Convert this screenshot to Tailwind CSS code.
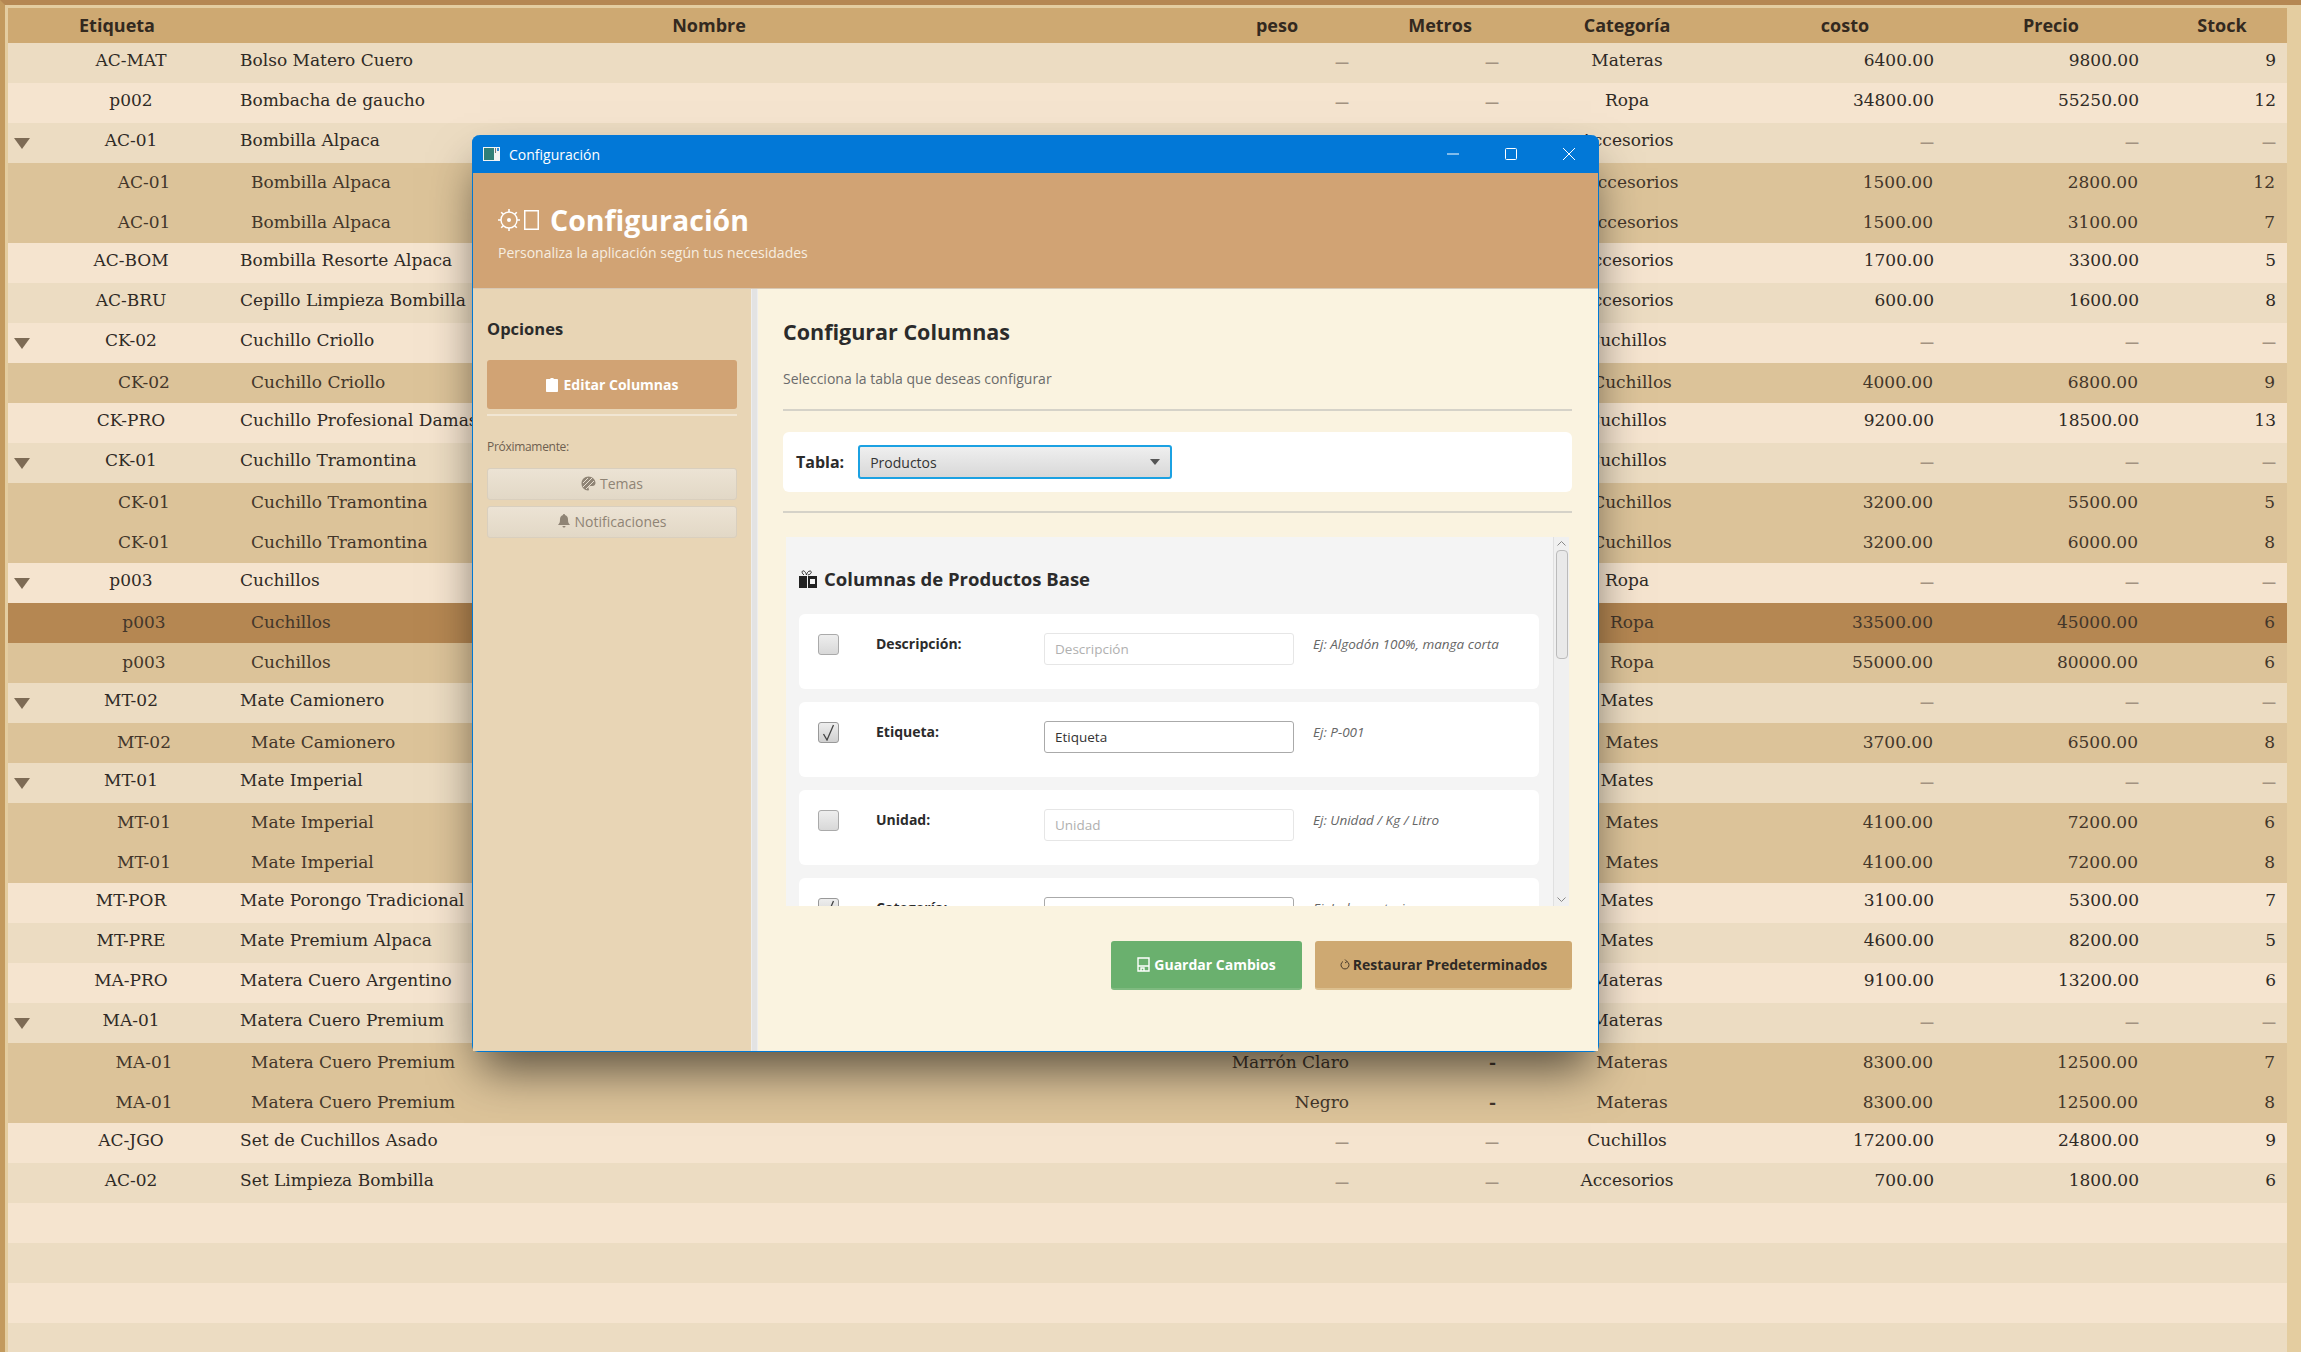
<!DOCTYPE html>
<html lang="es"><head><meta charset="utf-8"><title>Configuración</title>
<script src="https://cdn.jsdelivr.net/npm/@tailwindcss/browser@4"></script></head>
<body class="overflow-hidden">
<div class="relative w-[2301px] h-[1352px] overflow-hidden bg-[#e4cda0] border-t-[5px] border-t-[#b58752] border-l-[5px] border-l-[#c39a5e] pt-[3px] pl-[3px] pr-[14px] font-['DejaVu_Serif',serif] text-[17px] text-[#2f2a25]">

<div class="grid grid-cols-[224px_954px_182px_144px_230px_206px_206px_133px] h-[35px] items-center bg-[#cea972] font-['Open_Sans',sans-serif] font-bold text-[18px] text-[#33291f] text-center">
<div class="pr-[6px]">Etiqueta</div><div>Nombre</div><div>peso</div><div>Metros</div><div>Categoría</div><div>costo</div><div>Precio</div><div class="pl-[3px]">Stock</div></div>

<div class="grid grid-cols-[28px_196px_954px_182px_144px_230px_206px_206px_133px] h-10 items-center pb-1 bg-[#ecdcc2]"><div></div><div class="pr-[6px] text-center">AC-MAT</div><div class="pl-2">Bolso Matero Cuero</div><div class="pr-[19px] text-right font-['Open_Sans',sans-serif] font-bold text-[14px] text-[#a39280]">—</div><div class="pr-[13px] text-right font-['Open_Sans',sans-serif] font-bold text-[14px] text-[#a39280]">—</div><div class="text-center">Materas</div><div class="pr-[14px] text-right">6400.00</div><div class="pr-[15px] text-right">9800.00</div><div class="pr-[11px] text-right">9</div></div>
<div class="grid grid-cols-[28px_196px_954px_182px_144px_230px_206px_206px_133px] h-10 items-center pb-1 bg-[#f5e4cf]"><div></div><div class="pr-[6px] text-center">p002</div><div class="pl-2">Bombacha de gaucho</div><div class="pr-[19px] text-right font-['Open_Sans',sans-serif] font-bold text-[14px] text-[#a39280]">—</div><div class="pr-[13px] text-right font-['Open_Sans',sans-serif] font-bold text-[14px] text-[#a39280]">—</div><div class="text-center">Ropa</div><div class="pr-[14px] text-right">34800.00</div><div class="pr-[15px] text-right">55250.00</div><div class="pr-[11px] text-right">12</div></div>
<div class="grid grid-cols-[28px_196px_954px_182px_144px_230px_206px_206px_133px] h-10 items-center pb-1 bg-[#ecdcc2]"><div class="pl-[6px] pt-1"><svg width="16" height="11" viewBox="0 0 16 11" class="block"><path d="M0 0H16L8 11Z" fill="#7d6b55"/></svg></div><div class="pr-[6px] text-center">AC-01</div><div class="pl-2">Bombilla Alpaca</div><div></div><div></div><div class="text-center">Accesorios</div><div class="pr-[14px] text-right font-['Open_Sans',sans-serif] font-bold text-[14px] text-[#a39280]">—</div><div class="pr-[15px] text-right font-['Open_Sans',sans-serif] font-bold text-[14px] text-[#a39280]">—</div><div class="pr-[11px] text-right font-['Open_Sans',sans-serif] font-bold text-[14px] text-[#a39280]">—</div></div>
<div class="grid grid-cols-[28px_196px_954px_182px_144px_230px_206px_206px_133px] h-10 items-center bg-[#dcc399] text-[#43362a]"><div></div><div class="pl-[20px] text-center">AC-01</div><div class="pl-[19px]">Bombilla Alpaca</div><div></div><div></div><div class="pl-[10px] text-center">Accesorios</div><div class="pr-[15px] text-right">1500.00</div><div class="pr-[16px] text-right">2800.00</div><div class="pr-[12px] text-right">12</div></div>
<div class="grid grid-cols-[28px_196px_954px_182px_144px_230px_206px_206px_133px] h-10 items-center bg-[#dcc399] text-[#43362a]"><div></div><div class="pl-[20px] text-center">AC-01</div><div class="pl-[19px]">Bombilla Alpaca</div><div></div><div></div><div class="pl-[10px] text-center">Accesorios</div><div class="pr-[15px] text-right">1500.00</div><div class="pr-[16px] text-right">3100.00</div><div class="pr-[12px] text-right">7</div></div>
<div class="grid grid-cols-[28px_196px_954px_182px_144px_230px_206px_206px_133px] h-10 items-center pb-1 bg-[#f5e4cf]"><div></div><div class="pr-[6px] text-center">AC-BOM</div><div class="pl-2">Bombilla Resorte Alpaca</div><div></div><div></div><div class="text-center">Accesorios</div><div class="pr-[14px] text-right">1700.00</div><div class="pr-[15px] text-right">3300.00</div><div class="pr-[11px] text-right">5</div></div>
<div class="grid grid-cols-[28px_196px_954px_182px_144px_230px_206px_206px_133px] h-10 items-center pb-1 bg-[#ecdcc2]"><div></div><div class="pr-[6px] text-center">AC-BRU</div><div class="pl-2">Cepillo Limpieza Bombilla</div><div></div><div></div><div class="text-center">Accesorios</div><div class="pr-[14px] text-right">600.00</div><div class="pr-[15px] text-right">1600.00</div><div class="pr-[11px] text-right">8</div></div>
<div class="grid grid-cols-[28px_196px_954px_182px_144px_230px_206px_206px_133px] h-10 items-center pb-1 bg-[#f5e4cf]"><div class="pl-[6px] pt-1"><svg width="16" height="11" viewBox="0 0 16 11" class="block"><path d="M0 0H16L8 11Z" fill="#7d6b55"/></svg></div><div class="pr-[6px] text-center">CK-02</div><div class="pl-2">Cuchillo Criollo</div><div></div><div></div><div class="text-center">Cuchillos</div><div class="pr-[14px] text-right font-['Open_Sans',sans-serif] font-bold text-[14px] text-[#a39280]">—</div><div class="pr-[15px] text-right font-['Open_Sans',sans-serif] font-bold text-[14px] text-[#a39280]">—</div><div class="pr-[11px] text-right font-['Open_Sans',sans-serif] font-bold text-[14px] text-[#a39280]">—</div></div>
<div class="grid grid-cols-[28px_196px_954px_182px_144px_230px_206px_206px_133px] h-10 items-center bg-[#dcc399] text-[#43362a]"><div></div><div class="pl-[20px] text-center">CK-02</div><div class="pl-[19px]">Cuchillo Criollo</div><div></div><div></div><div class="pl-[10px] text-center">Cuchillos</div><div class="pr-[15px] text-right">4000.00</div><div class="pr-[16px] text-right">6800.00</div><div class="pr-[12px] text-right">9</div></div>
<div class="grid grid-cols-[28px_196px_954px_182px_144px_230px_206px_206px_133px] h-10 items-center pb-1 bg-[#f5e4cf]"><div></div><div class="pr-[6px] text-center">CK-PRO</div><div class="pl-2">Cuchillo Profesional Damasco</div><div></div><div></div><div class="text-center">Cuchillos</div><div class="pr-[14px] text-right">9200.00</div><div class="pr-[15px] text-right">18500.00</div><div class="pr-[11px] text-right">13</div></div>
<div class="grid grid-cols-[28px_196px_954px_182px_144px_230px_206px_206px_133px] h-10 items-center pb-1 bg-[#ecdcc2]"><div class="pl-[6px] pt-1"><svg width="16" height="11" viewBox="0 0 16 11" class="block"><path d="M0 0H16L8 11Z" fill="#7d6b55"/></svg></div><div class="pr-[6px] text-center">CK-01</div><div class="pl-2">Cuchillo Tramontina</div><div></div><div></div><div class="text-center">Cuchillos</div><div class="pr-[14px] text-right font-['Open_Sans',sans-serif] font-bold text-[14px] text-[#a39280]">—</div><div class="pr-[15px] text-right font-['Open_Sans',sans-serif] font-bold text-[14px] text-[#a39280]">—</div><div class="pr-[11px] text-right font-['Open_Sans',sans-serif] font-bold text-[14px] text-[#a39280]">—</div></div>
<div class="grid grid-cols-[28px_196px_954px_182px_144px_230px_206px_206px_133px] h-10 items-center bg-[#dcc399] text-[#43362a]"><div></div><div class="pl-[20px] text-center">CK-01</div><div class="pl-[19px]">Cuchillo Tramontina</div><div></div><div></div><div class="pl-[10px] text-center">Cuchillos</div><div class="pr-[15px] text-right">3200.00</div><div class="pr-[16px] text-right">5500.00</div><div class="pr-[12px] text-right">5</div></div>
<div class="grid grid-cols-[28px_196px_954px_182px_144px_230px_206px_206px_133px] h-10 items-center bg-[#dcc399] text-[#43362a]"><div></div><div class="pl-[20px] text-center">CK-01</div><div class="pl-[19px]">Cuchillo Tramontina</div><div></div><div></div><div class="pl-[10px] text-center">Cuchillos</div><div class="pr-[15px] text-right">3200.00</div><div class="pr-[16px] text-right">6000.00</div><div class="pr-[12px] text-right">8</div></div>
<div class="grid grid-cols-[28px_196px_954px_182px_144px_230px_206px_206px_133px] h-10 items-center pb-1 bg-[#f5e4cf]"><div class="pl-[6px] pt-1"><svg width="16" height="11" viewBox="0 0 16 11" class="block"><path d="M0 0H16L8 11Z" fill="#7d6b55"/></svg></div><div class="pr-[6px] text-center">p003</div><div class="pl-2">Cuchillos</div><div></div><div></div><div class="text-center">Ropa</div><div class="pr-[14px] text-right font-['Open_Sans',sans-serif] font-bold text-[14px] text-[#a39280]">—</div><div class="pr-[15px] text-right font-['Open_Sans',sans-serif] font-bold text-[14px] text-[#a39280]">—</div><div class="pr-[11px] text-right font-['Open_Sans',sans-serif] font-bold text-[14px] text-[#a39280]">—</div></div>
<div class="grid grid-cols-[28px_196px_954px_182px_144px_230px_206px_206px_133px] h-10 items-center bg-[#b58752] text-[#43362a]"><div></div><div class="pl-[20px] text-center">p003</div><div class="pl-[19px]">Cuchillos</div><div></div><div></div><div class="pl-[10px] text-center">Ropa</div><div class="pr-[15px] text-right">33500.00</div><div class="pr-[16px] text-right">45000.00</div><div class="pr-[12px] text-right">6</div></div>
<div class="grid grid-cols-[28px_196px_954px_182px_144px_230px_206px_206px_133px] h-10 items-center bg-[#dcc399] text-[#43362a]"><div></div><div class="pl-[20px] text-center">p003</div><div class="pl-[19px]">Cuchillos</div><div></div><div></div><div class="pl-[10px] text-center">Ropa</div><div class="pr-[15px] text-right">55000.00</div><div class="pr-[16px] text-right">80000.00</div><div class="pr-[12px] text-right">6</div></div>
<div class="grid grid-cols-[28px_196px_954px_182px_144px_230px_206px_206px_133px] h-10 items-center pb-1 bg-[#ecdcc2]"><div class="pl-[6px] pt-1"><svg width="16" height="11" viewBox="0 0 16 11" class="block"><path d="M0 0H16L8 11Z" fill="#7d6b55"/></svg></div><div class="pr-[6px] text-center">MT-02</div><div class="pl-2">Mate Camionero</div><div></div><div></div><div class="text-center">Mates</div><div class="pr-[14px] text-right font-['Open_Sans',sans-serif] font-bold text-[14px] text-[#a39280]">—</div><div class="pr-[15px] text-right font-['Open_Sans',sans-serif] font-bold text-[14px] text-[#a39280]">—</div><div class="pr-[11px] text-right font-['Open_Sans',sans-serif] font-bold text-[14px] text-[#a39280]">—</div></div>
<div class="grid grid-cols-[28px_196px_954px_182px_144px_230px_206px_206px_133px] h-10 items-center bg-[#dcc399] text-[#43362a]"><div></div><div class="pl-[20px] text-center">MT-02</div><div class="pl-[19px]">Mate Camionero</div><div></div><div></div><div class="pl-[10px] text-center">Mates</div><div class="pr-[15px] text-right">3700.00</div><div class="pr-[16px] text-right">6500.00</div><div class="pr-[12px] text-right">8</div></div>
<div class="grid grid-cols-[28px_196px_954px_182px_144px_230px_206px_206px_133px] h-10 items-center pb-1 bg-[#ecdcc2]"><div class="pl-[6px] pt-1"><svg width="16" height="11" viewBox="0 0 16 11" class="block"><path d="M0 0H16L8 11Z" fill="#7d6b55"/></svg></div><div class="pr-[6px] text-center">MT-01</div><div class="pl-2">Mate Imperial</div><div></div><div></div><div class="text-center">Mates</div><div class="pr-[14px] text-right font-['Open_Sans',sans-serif] font-bold text-[14px] text-[#a39280]">—</div><div class="pr-[15px] text-right font-['Open_Sans',sans-serif] font-bold text-[14px] text-[#a39280]">—</div><div class="pr-[11px] text-right font-['Open_Sans',sans-serif] font-bold text-[14px] text-[#a39280]">—</div></div>
<div class="grid grid-cols-[28px_196px_954px_182px_144px_230px_206px_206px_133px] h-10 items-center bg-[#dcc399] text-[#43362a]"><div></div><div class="pl-[20px] text-center">MT-01</div><div class="pl-[19px]">Mate Imperial</div><div></div><div></div><div class="pl-[10px] text-center">Mates</div><div class="pr-[15px] text-right">4100.00</div><div class="pr-[16px] text-right">7200.00</div><div class="pr-[12px] text-right">6</div></div>
<div class="grid grid-cols-[28px_196px_954px_182px_144px_230px_206px_206px_133px] h-10 items-center bg-[#dcc399] text-[#43362a]"><div></div><div class="pl-[20px] text-center">MT-01</div><div class="pl-[19px]">Mate Imperial</div><div></div><div></div><div class="pl-[10px] text-center">Mates</div><div class="pr-[15px] text-right">4100.00</div><div class="pr-[16px] text-right">7200.00</div><div class="pr-[12px] text-right">8</div></div>
<div class="grid grid-cols-[28px_196px_954px_182px_144px_230px_206px_206px_133px] h-10 items-center pb-1 bg-[#f5e4cf]"><div></div><div class="pr-[6px] text-center">MT-POR</div><div class="pl-2">Mate Porongo Tradicional</div><div></div><div></div><div class="text-center">Mates</div><div class="pr-[14px] text-right">3100.00</div><div class="pr-[15px] text-right">5300.00</div><div class="pr-[11px] text-right">7</div></div>
<div class="grid grid-cols-[28px_196px_954px_182px_144px_230px_206px_206px_133px] h-10 items-center pb-1 bg-[#ecdcc2]"><div></div><div class="pr-[6px] text-center">MT-PRE</div><div class="pl-2">Mate Premium Alpaca</div><div></div><div></div><div class="text-center">Mates</div><div class="pr-[14px] text-right">4600.00</div><div class="pr-[15px] text-right">8200.00</div><div class="pr-[11px] text-right">5</div></div>
<div class="grid grid-cols-[28px_196px_954px_182px_144px_230px_206px_206px_133px] h-10 items-center pb-1 bg-[#f5e4cf]"><div></div><div class="pr-[6px] text-center">MA-PRO</div><div class="pl-2">Matera Cuero Argentino</div><div></div><div></div><div class="text-center">Materas</div><div class="pr-[14px] text-right">9100.00</div><div class="pr-[15px] text-right">13200.00</div><div class="pr-[11px] text-right">6</div></div>
<div class="grid grid-cols-[28px_196px_954px_182px_144px_230px_206px_206px_133px] h-10 items-center pb-1 bg-[#ecdcc2]"><div class="pl-[6px] pt-1"><svg width="16" height="11" viewBox="0 0 16 11" class="block"><path d="M0 0H16L8 11Z" fill="#7d6b55"/></svg></div><div class="pr-[6px] text-center">MA-01</div><div class="pl-2">Matera Cuero Premium</div><div></div><div></div><div class="text-center">Materas</div><div class="pr-[14px] text-right font-['Open_Sans',sans-serif] font-bold text-[14px] text-[#a39280]">—</div><div class="pr-[15px] text-right font-['Open_Sans',sans-serif] font-bold text-[14px] text-[#a39280]">—</div><div class="pr-[11px] text-right font-['Open_Sans',sans-serif] font-bold text-[14px] text-[#a39280]">—</div></div>
<div class="grid grid-cols-[28px_196px_954px_182px_144px_230px_206px_206px_133px] h-10 items-center bg-[#dcc399] text-[#43362a]"><div></div><div class="pl-[20px] text-center">MA-01</div><div class="pl-[19px]">Matera Cuero Premium</div><div class="pr-[19px] text-right">Marrón Claro</div><div class="pr-[16px] text-right font-bold">-</div><div class="pl-[10px] text-center">Materas</div><div class="pr-[15px] text-right">8300.00</div><div class="pr-[16px] text-right">12500.00</div><div class="pr-[12px] text-right">7</div></div>
<div class="grid grid-cols-[28px_196px_954px_182px_144px_230px_206px_206px_133px] h-10 items-center bg-[#dcc399] text-[#43362a]"><div></div><div class="pl-[20px] text-center">MA-01</div><div class="pl-[19px]">Matera Cuero Premium</div><div class="pr-[19px] text-right">Negro</div><div class="pr-[16px] text-right font-bold">-</div><div class="pl-[10px] text-center">Materas</div><div class="pr-[15px] text-right">8300.00</div><div class="pr-[16px] text-right">12500.00</div><div class="pr-[12px] text-right">8</div></div>
<div class="grid grid-cols-[28px_196px_954px_182px_144px_230px_206px_206px_133px] h-10 items-center pb-1 bg-[#f5e4cf]"><div></div><div class="pr-[6px] text-center">AC-JGO</div><div class="pl-2">Set de Cuchillos Asado</div><div class="pr-[19px] text-right font-['Open_Sans',sans-serif] font-bold text-[14px] text-[#a39280]">—</div><div class="pr-[13px] text-right font-['Open_Sans',sans-serif] font-bold text-[14px] text-[#a39280]">—</div><div class="text-center">Cuchillos</div><div class="pr-[14px] text-right">17200.00</div><div class="pr-[15px] text-right">24800.00</div><div class="pr-[11px] text-right">9</div></div>
<div class="grid grid-cols-[28px_196px_954px_182px_144px_230px_206px_206px_133px] h-10 items-center pb-1 bg-[#ecdcc2]"><div></div><div class="pr-[6px] text-center">AC-02</div><div class="pl-2">Set Limpieza Bombilla</div><div class="pr-[19px] text-right font-['Open_Sans',sans-serif] font-bold text-[14px] text-[#a39280]">—</div><div class="pr-[13px] text-right font-['Open_Sans',sans-serif] font-bold text-[14px] text-[#a39280]">—</div><div class="text-center">Accesorios</div><div class="pr-[14px] text-right">700.00</div><div class="pr-[15px] text-right">1800.00</div><div class="pr-[11px] text-right">6</div></div>
<div class="h-10 bg-[#f5e4cf]"></div><div class="h-10 bg-[#ecdcc2]"></div><div class="h-10 bg-[#f5e4cf]"></div><div class="h-10 bg-[#ecdcc2]"></div>

<div class="absolute left-[467px] top-[130px] w-[1127px] h-[917px] flex flex-col rounded-t-[8px] rounded-b-[6px] border border-[#0078d4] border-t-0 shadow-[0_25px_45px_-8px_rgba(0,0,0,0.6)] font-['Open_Sans',sans-serif] text-[#2b2b2b] bg-[#faf3e0]">
  <div class="h-[38px] shrink-0 flex items-center bg-[#0278d7] rounded-t-[8px] -mx-px pl-[11px] text-white text-[14px]">
    <svg width="17" height="14" viewBox="0 0 17 14" class="mr-[9px]"><rect width="17" height="14" fill="#f2f4f4"/><rect x="1" y="1" width="10" height="12" fill="#2f7f78"/><rect x="12" y="1" width="1" height="5" fill="#777"/><rect x="14" y="1" width="2" height="3" fill="#2e8ad8"/></svg>
    <span>Configuración</span>
    <div class="ml-auto flex items-center pr-[24px] gap-[46px]">
      <svg width="12" height="12" viewBox="0 0 12 12"><path d="M0 6H12" stroke="#fff"/></svg>
      <svg width="12" height="12" viewBox="0 0 12 12"><rect x=".5" y=".5" width="11" height="11" rx="1" fill="none" stroke="#fff"/></svg>
      <svg width="12" height="12" viewBox="0 0 12 12"><path d="M0 0L12 12M12 0L0 12" stroke="#fff"/></svg>
    </div>
  </div>
  <div class="h-[116px] shrink-0 bg-[#d1a374] pl-[25px] border-b border-b-[#d8c8b4]">
    <div class="flex items-center h-[40px] mt-[27px] text-white font-bold text-[28.5px]">
      <svg width="22" height="22" viewBox="0 0 22 22" class="mr-[4px]" fill="none" stroke="#fff"><circle cx="11" cy="11" r="8" stroke-width="1.4"/><circle cx="11" cy="11" r="2" fill="#fff" stroke="none"/><path d="M11 0V3M11 19V22M0 11H3M19 11H22M3.2 3.2L5.3 5.3M16.7 16.7L18.8 18.8M3.2 18.8L5.3 16.7M16.7 5.3L18.8 3.2" stroke-width="1.6"/></svg>
      <svg width="15" height="20" viewBox="0 0 15 20" class="mr-[11px]"><rect x=".75" y=".75" width="13.5" height="18.5" fill="none" stroke="#fff" stroke-width="1.5"/></svg>
      <span>Configuración</span>
    </div>
    <p class="mt-[3px] text-[14px] leading-[20px] text-[#f7eee0]">Personaliza la aplicación según tus necesidades</p>
  </div>
  <div class="flex flex-1 min-h-0">
    <div class="w-[278px] shrink-0 bg-[#e8d5b5] px-[14px] pt-[29px] flex flex-col">
      <div class="font-bold text-[16.5px] leading-[22px] text-[#2b2b2b]">Opciones</div>
      <div class="mt-[20px] h-[49px] rounded-[3px] bg-[#d1a374] flex items-center justify-center gap-[6px] text-white font-bold text-[14px]">
        <svg width="12" height="15" viewBox="0 0 12 15"><path d="M1 2H4C4 .5 8 .5 8 2H11C11.6 2 12 2.4 12 3V14C12 14.6 11.6 15 11 15H1C.4 15 0 14.6 0 14V3C0 2.4 .4 2 1 2Z" fill="#fff"/></svg>
        <span>Editar Columnas</span>
      </div>
      <div class="mt-[5px] h-[2px] bg-[#f1e6d3]"></div>
      <div class="mt-[22px] text-[12px] leading-[18px] text-[#6e5f50] tracking-[-0.3px]">Próximamente:</div>
      <div class="mt-[12px] h-[32px] rounded-[3px] border border-[#d9cfbe] bg-linear-to-b from-[#ece3d4] to-[#e2d8c6] flex items-center justify-center gap-[4px] text-[14px] text-[#8f8475] pb-[2px]">
        <svg width="15" height="15" viewBox="0 0 15 15"><path d="M7.5 0.5C3.5 0.5 .5 3.5 .5 7.5S3.5 14.5 7 14.5C8.5 14.5 8 13 7.5 12.2C7 11 8 10 9.5 10H11.5C13.5 10 14.5 8.5 14.5 7C14.5 3.5 11.5 .5 7.5 .5Z" fill="#8f8475"/><path d="M2 11L11 2M5 13L13 5M2 7L7 2" stroke="#e8dfd0"/></svg>
        <span>Temas</span>
      </div>
      <div class="mt-[6px] h-[32px] rounded-[3px] border border-[#d9cfbe] bg-linear-to-b from-[#ece3d4] to-[#e2d8c6] flex items-center justify-center gap-[5px] text-[14px] text-[#8f8475] pb-[2px]">
        <svg width="12" height="14" viewBox="0 0 12 14"><path d="M6 0C6.7 0 7 .5 7 1C9.2 1.5 10 3.5 10 5.5C10 8 10.5 9.5 12 11H0C1.5 9.5 2 8 2 5.5C2 3.5 2.8 1.5 5 1C5 .5 5.3 0 6 0ZM4.5 12H7.5C7.5 14 4.5 14 4.5 12Z" fill="#8f8475"/></svg>
        <span>Notificaciones</span>
      </div>
    </div>
    <div class="w-[7px] shrink-0 bg-[#e3e3e3] border-x border-x-[#ededed]"></div>
    <div class="flex-1 min-w-0 bg-[#faf3e0] pl-[25px] pr-[26px] flex flex-col">
      <div class="mt-[29px] font-bold text-[21.5px] leading-[28px] text-[#2b2b2b]">Configurar Columnas</div>
      <div class="mt-[23px] text-[14px] leading-[20px] text-[#6b6b6b]">Selecciona la tabla que deseas configurar</div>
      <div class="mt-[20px] h-[2px] bg-[#d5d2c8]"></div>
      <div class="mt-[21px] h-[60px] shrink-0 bg-white rounded-[6px] flex items-center pl-[13px] font-bold text-[16px]">
        <span>Tabla:</span>
        <div class="ml-[14px] w-[314px] h-[34px] rounded-[3px] border-2 border-[#1ba1e2] bg-linear-to-b from-[#efefef] to-[#d8d8d8] flex items-center justify-between pl-[10px] pr-[10px] font-normal text-[14px] text-[#333]">
          <span>Productos</span>
          <svg width="10" height="6" viewBox="0 0 10 6"><path d="M0 0H10L5 6Z" fill="#555"/></svg>
        </div>
      </div>
      <div class="mt-[19px] h-[2px] bg-[#d5d2c8]"></div>
      <div class="mt-[24px] h-[369px] shrink-0 flex overflow-hidden">
        <div class="ml-[3px] w-[767px] shrink-0 bg-[#f4f4f4] pl-[13px] pr-[14px] overflow-hidden">
          <div class="mt-[30px] h-[24px] flex items-center gap-[7px] font-bold text-[18.5px] text-[#2b2b2b]">
            <svg width="18" height="18" viewBox="0 0 18 18" class="shrink-0"><path d="M0 6H8V18H0ZM9 6H18V9H9ZM9 14H18V18H9ZM16 9H18V14H16ZM9 9H11V14H9Z" fill="#222"/><path d="M5 5C2 3 3 0 5 1C6 1.5 7 3 7.5 5C8 3 9 1 11 1C13 1 13 4 9 5" fill="none" stroke="#333"/></svg>
            <span>Columnas de Productos Base</span>
          </div>
          <div class="mt-[23px] w-[740px] h-[75px] bg-white rounded-[6px] flex items-start">
            <div class="ml-[19px] mt-[20px] w-[21px] h-[21px] rounded-[3px] border border-[#aaa] bg-linear-to-b from-[#eee] to-[#d8d8d8]"></div>
            <div class="ml-[37px] mt-[19px] w-[168px] text-[14px] leading-[22px] font-bold">Descripción:</div>
            <div class="mt-[19px] w-[250px] h-[32px] rounded-[3px] border border-[#e6e6e6] bg-white pl-[10px] text-[13.5px] leading-[30px] text-[#b0b0b0]">Descripción</div>
            <div class="ml-[19px] mt-[19px] text-[13.5px] leading-[22px] italic text-[#666]">Ej: Algodón 100%, manga corta</div>
          </div>
          <div class="mt-[13px] w-[740px] h-[75px] bg-white rounded-[6px] flex items-start">
            <div class="ml-[19px] mt-[20px] w-[21px] h-[21px] rounded-[3px] border border-[#999] bg-linear-to-b from-[#eee] to-[#d0d0d0] flex items-center justify-center"><svg width="13" height="17" viewBox="0 0 13 17"><path d="M1.5 10L5 16L11.5 1" fill="none" stroke="#444" stroke-width="1.3"/></svg></div>
            <div class="ml-[37px] mt-[19px] w-[168px] text-[14px] leading-[22px] font-bold">Etiqueta:</div>
            <div class="mt-[19px] w-[250px] h-[32px] rounded-[3px] border border-[#aaa] bg-white pl-[10px] text-[13.5px] leading-[30px] text-[#333]">Etiqueta</div>
            <div class="ml-[19px] mt-[19px] text-[13.5px] leading-[22px] italic text-[#666]">Ej: P-001</div>
          </div>
          <div class="mt-[13px] w-[740px] h-[75px] bg-white rounded-[6px] flex items-start">
            <div class="ml-[19px] mt-[20px] w-[21px] h-[21px] rounded-[3px] border border-[#aaa] bg-linear-to-b from-[#eee] to-[#d8d8d8]"></div>
            <div class="ml-[37px] mt-[19px] w-[168px] text-[14px] leading-[22px] font-bold">Unidad:</div>
            <div class="mt-[19px] w-[250px] h-[32px] rounded-[3px] border border-[#e6e6e6] bg-white pl-[10px] text-[13.5px] leading-[30px] text-[#b0b0b0]">Unidad</div>
            <div class="ml-[19px] mt-[19px] text-[13.5px] leading-[22px] italic text-[#666]">Ej: Unidad / Kg / Litro</div>
          </div>
          <div class="mt-[13px] w-[740px] h-[75px] bg-white rounded-[6px] flex items-start">
            <div class="ml-[19px] mt-[20px] w-[21px] h-[21px] rounded-[3px] border border-[#999] bg-linear-to-b from-[#eee] to-[#d0d0d0] flex items-center justify-center"><svg width="13" height="17" viewBox="0 0 13 17"><path d="M1.5 10L5 16L11.5 1" fill="none" stroke="#444" stroke-width="1.3"/></svg></div>
            <div class="ml-[37px] mt-[19px] w-[168px] text-[14px] leading-[22px] font-bold">Categoría:</div>
            <div class="mt-[19px] w-[250px] h-[32px] rounded-[3px] border border-[#aaa] bg-white pl-[10px] text-[13.5px] leading-[30px] text-[#333]">Categoría</div>
            <div class="ml-[19px] mt-[19px] text-[13.5px] leading-[22px] italic text-[#666]">Ej: Indumentaria</div>
          </div>
        </div>
        <div class="w-[16px] shrink-0 bg-[#f0f0f0] border-l border-l-[#e0e0e0] flex flex-col items-center justify-between py-[4px]">
          <svg width="9" height="5" viewBox="0 0 9 5" class="shrink-0"><path d="M.5 4.5L4.5 .5L8.5 4.5" fill="none" stroke="#888"/></svg>
          <div class="w-[12px] h-[109px] mb-auto mt-[4px] rounded-[4px] bg-[#e9e9e9] border border-[#bbb]"></div>
          <svg width="9" height="5" viewBox="0 0 9 5" class="shrink-0"><path d="M.5 .5L4.5 4.5L8.5 .5" fill="none" stroke="#888"/></svg>
        </div>
      </div>
      <div class="mt-[35px] flex justify-end gap-[13px] font-bold text-[14px]">
        <div class="w-[191px] h-[49px] rounded-[3px] bg-[#6ab06e] border-b-2 border-b-[#7fba80] text-white flex items-center justify-center gap-[4px]">
          <svg width="13" height="15" viewBox="0 0 13 15" fill="none" stroke="#fff" stroke-width="1.4"><path d="M1 1H12V14H1ZM1 9H12M4 14V11H7V14"/></svg>
          <span>Guardar Cambios</span>
        </div>
        <div class="w-[257px] h-[49px] rounded-[3px] bg-[#cea972] border-b-2 border-b-[#dcc08f] text-[#2f2a25] flex items-center justify-center gap-[3px]">
          <svg width="10" height="11" viewBox="0 0 10 11" fill="none" stroke="#4a3a2a"><path d="M3 2.5A4 4 0 1 0 7 2.5M5 .5L7 2.5L5 4"/></svg>
          <span>Restaurar Predeterminados</span>
        </div>
      </div>
    </div>
  </div>
</div>
</div>
</body></html>
